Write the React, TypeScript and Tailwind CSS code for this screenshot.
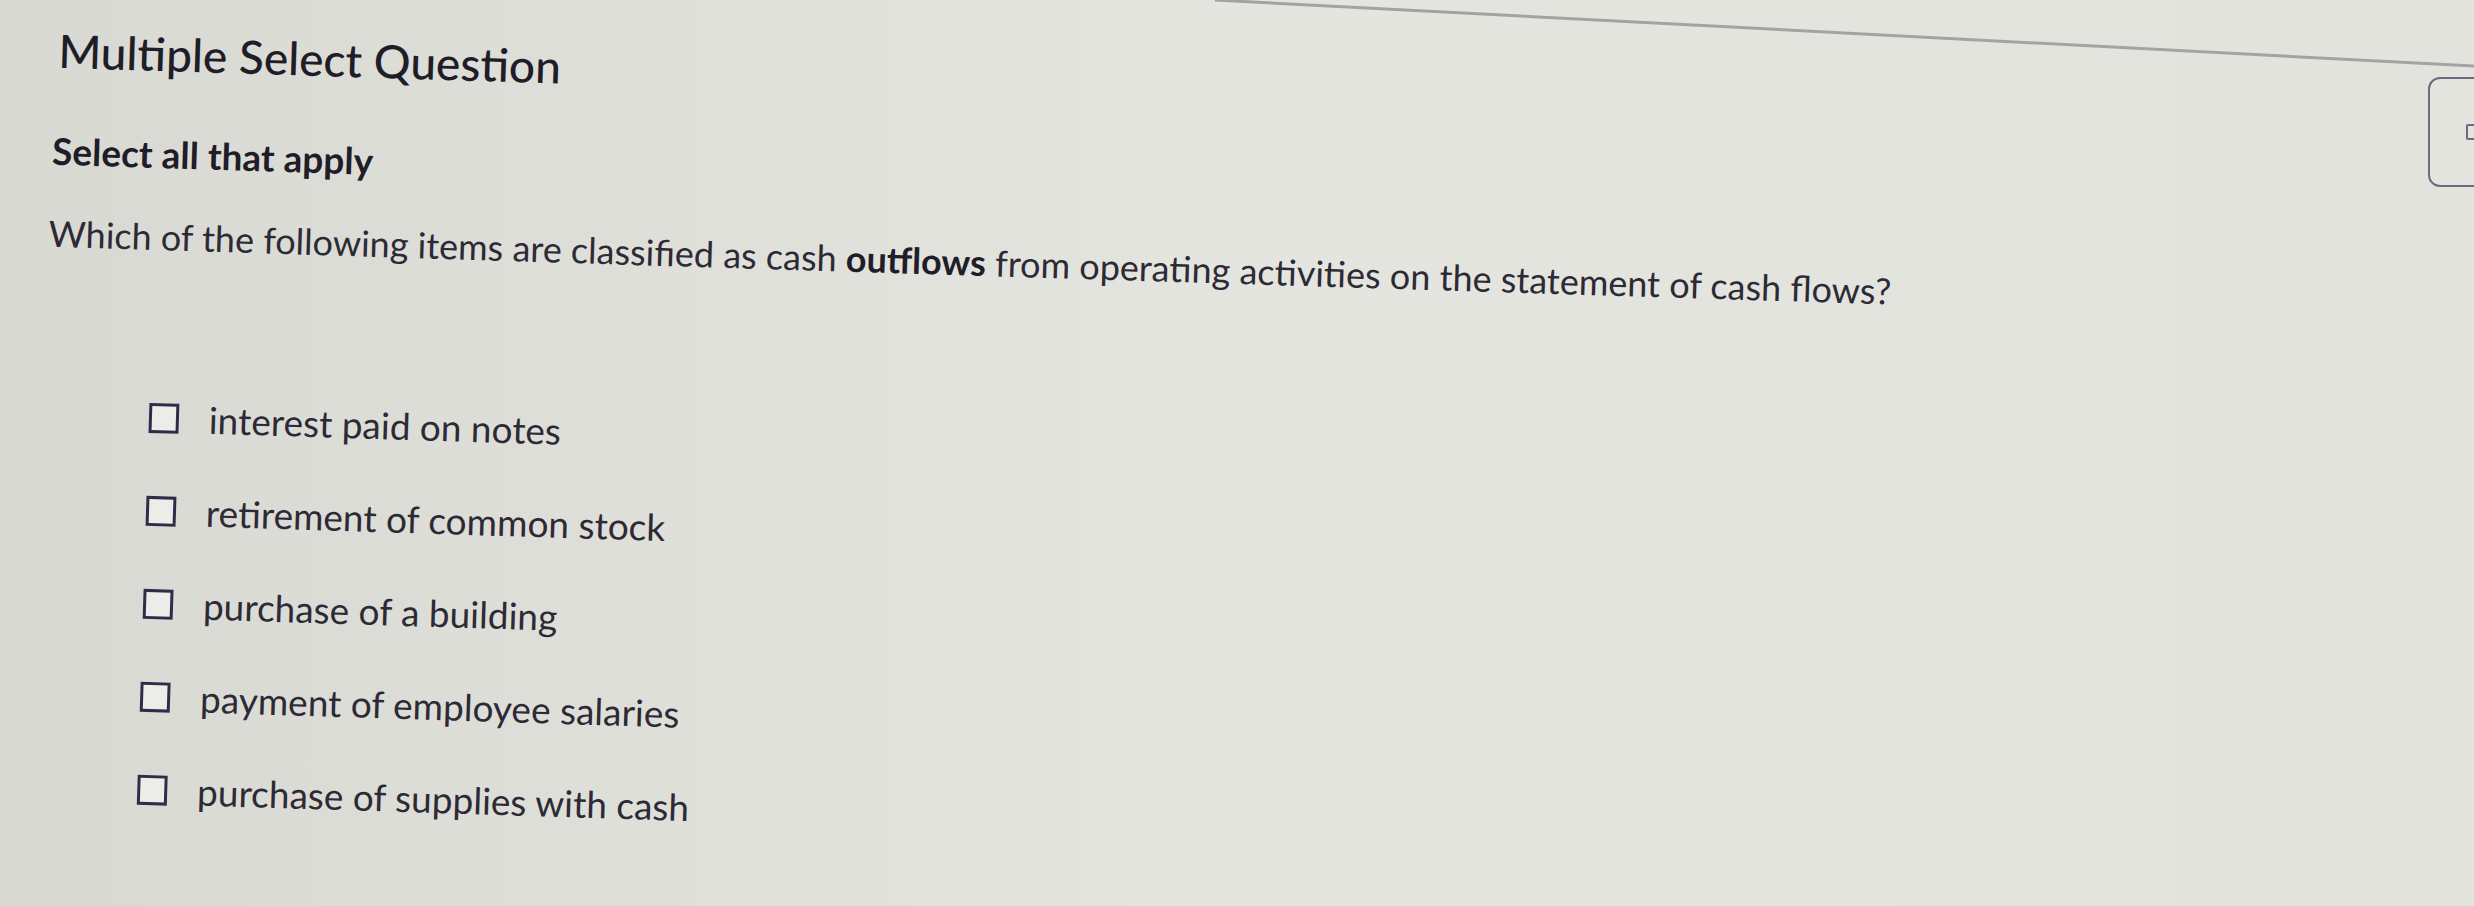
const options = [
  'interest paid on notes',
  'retirement of common stock',
  'purchase of a building',
  'payment of employee salaries',
  'purchase of supplies with cash',
]

function Checkbox() {
  return <span className="block h-[30px] w-[30px] shrink-0 border-[3px] border-[#2e2c48] bg-[#ecece8]" />
}

export default function App() {
  return (
    <div
      className="relative h-[906px] w-[2474px] overflow-hidden bg-linear-to-r from-[#d9d9d3] via-[#e5e5e0] to-[#e3e3de] text-[#2d2a36]"
      style={{ fontFamily: 'Lato, "Open Sans", sans-serif' }}
    >
      {/* edge of the screen frame */}
      <svg className="pointer-events-none absolute left-0 top-0" width="2474" height="120">
        <line x1="1215" y1="0" x2="2474" y2="66" stroke="#a3a3a3" strokeWidth="3" />
      </svg>

      {/* side tab on the right edge */}
      <div className="absolute left-[2428px] top-[77px] flex h-[110px] w-[80px] items-center rounded-[12px] border-2 border-[#6b6a80] bg-[#e4e4df]">
        <span className="ml-[36px] h-[16px] w-[14px] rounded-[2px] border-2 border-[#6b6a80]" />
      </div>

      <div className="origin-top-left rotate-[1.8deg] pl-[56px] pt-[20px]">
        <h1 className="ml-[4px] text-[46px] font-medium leading-[58px] text-[#1f1d28]">Multiple Select Question</h1>
        <p className="mt-[50px] ml-[1px] text-[37px] font-bold leading-[42px] text-[#1f1d28]">Select all that apply</p>
        <p className="mt-[40px] text-[36px] leading-[42px]">
          Which of the following items are classified as cash <span className="font-bold text-[#1f1d28]">outflows</span> from
          operating activities on the statement of cash flows?
        </p>

        <ul className="mt-[140px] ml-[106px] flex flex-col gap-[51px]">
          {options.map((o) => (
            <li key={o} className="flex items-center gap-[30px]">
              <Checkbox />
              <span className="text-[37px] leading-[42px]">{o}</span>
            </li>
          ))}
        </ul>
      </div>
    </div>
  )
}
